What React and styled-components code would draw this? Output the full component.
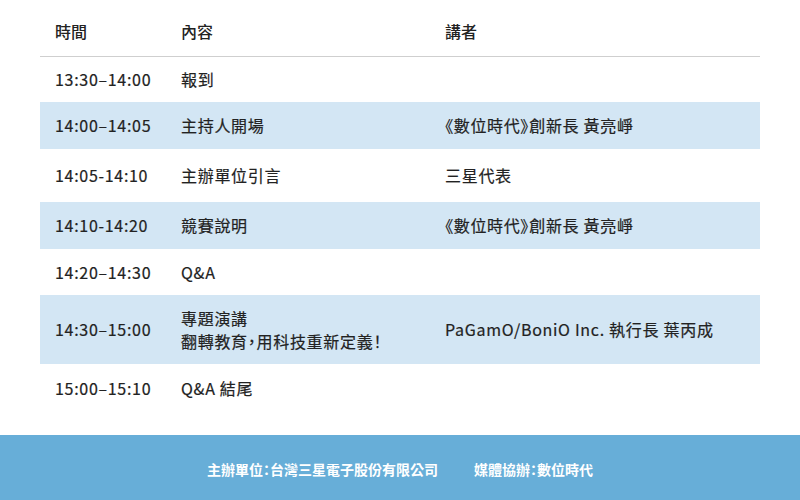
import React from "react";
import styled, { createGlobalStyle } from "styled-components";

const Global = createGlobalStyle`
  html, body { margin: 0; padding: 0; background: #fff; }
  body {
    font-family: "Noto Sans CJK TC", "Noto Sans", sans-serif;
    font-feature-settings: "palt";
    color: #222;
  }
`;

const Page = styled.div`
  width: 800px;
  height: 500px;
  display: flex;
  flex-direction: column;
  overflow: hidden;
`;

const Table = styled.div`
  margin: 0 40px;
  display: flex;
  flex-direction: column;
`;

const Row = styled.div`
  display: grid;
  grid-template-columns: 126px 264px 1fr;
  align-items: center;
  height: ${(p) => p.$h}px;
  background: ${(p) => (p.$alt ? "#d3e6f4" : "#fff")};
  font-size: 16px;
  font-weight: 400;
  line-height: 23px;
  letter-spacing: 0.7px;
  -webkit-text-stroke: 0.2px #222;
`;

const HeaderRow = styled(Row)`
  border-bottom: 1px solid #cfcfcf;
  padding-top: 6px;
  box-sizing: border-box;
  letter-spacing: 0;
  font-weight: 500;
  -webkit-text-stroke: 0;
`;

const Cell = styled.div`
  padding-left: 15px;
  white-space: nowrap;
`;

const Footer = styled.footer`
  margin-top: auto;
  height: 65px;
  background: #67aed8;
  display: flex;
  align-items: center;
  justify-content: center;
  gap: 36px;
  color: #fff;
  font-size: 14px;
  font-weight: 700;
  padding-top: 2px;
  box-sizing: border-box;
`;

const rows = [
  { time: "13:30–14:00", content: ["報到"], speaker: "", h: 45 },
  { time: "14:00–14:05", content: ["主持人開場"], speaker: "《數位時代》創新長 黃亮崢", h: 47, alt: true },
  { time: "14:05-14:10", content: ["主辦單位引言"], speaker: "三星代表", h: 53 },
  { time: "14:10-14:20", content: ["競賽說明"], speaker: "《數位時代》創新長 黃亮崢", h: 47, alt: true },
  { time: "14:20–14:30", content: ["Q&A"], speaker: "", h: 46 },
  { time: "14:30–15:00", content: ["專題演講", "翻轉教育，用科技重新定義！"], speaker: "PaGamO/BoniO Inc. 執行長 葉丙成", h: 69, alt: true },
  { time: "15:00–15:10", content: ["Q&A 結尾"], speaker: "", h: 48 },
];

export default function App() {
  return (
    <Page>
      <Global />
      <Table>
        <HeaderRow $h={57}>
          <Cell>時間</Cell>
          <Cell>內容</Cell>
          <Cell>講者</Cell>
        </HeaderRow>
        {rows.map((r, i) => (
          <Row key={i} $h={r.h} $alt={r.alt}>
            <Cell>{r.time}</Cell>
            <Cell>
              {r.content.map((c, j) => (
                <div key={j}>{c}</div>
              ))}
            </Cell>
            <Cell>{r.speaker}</Cell>
          </Row>
        ))}
      </Table>
      <Footer>
        <span>主辦單位：台灣三星電子股份有限公司</span>
        <span>媒體協辦：數位時代</span>
      </Footer>
    </Page>
  );
}
